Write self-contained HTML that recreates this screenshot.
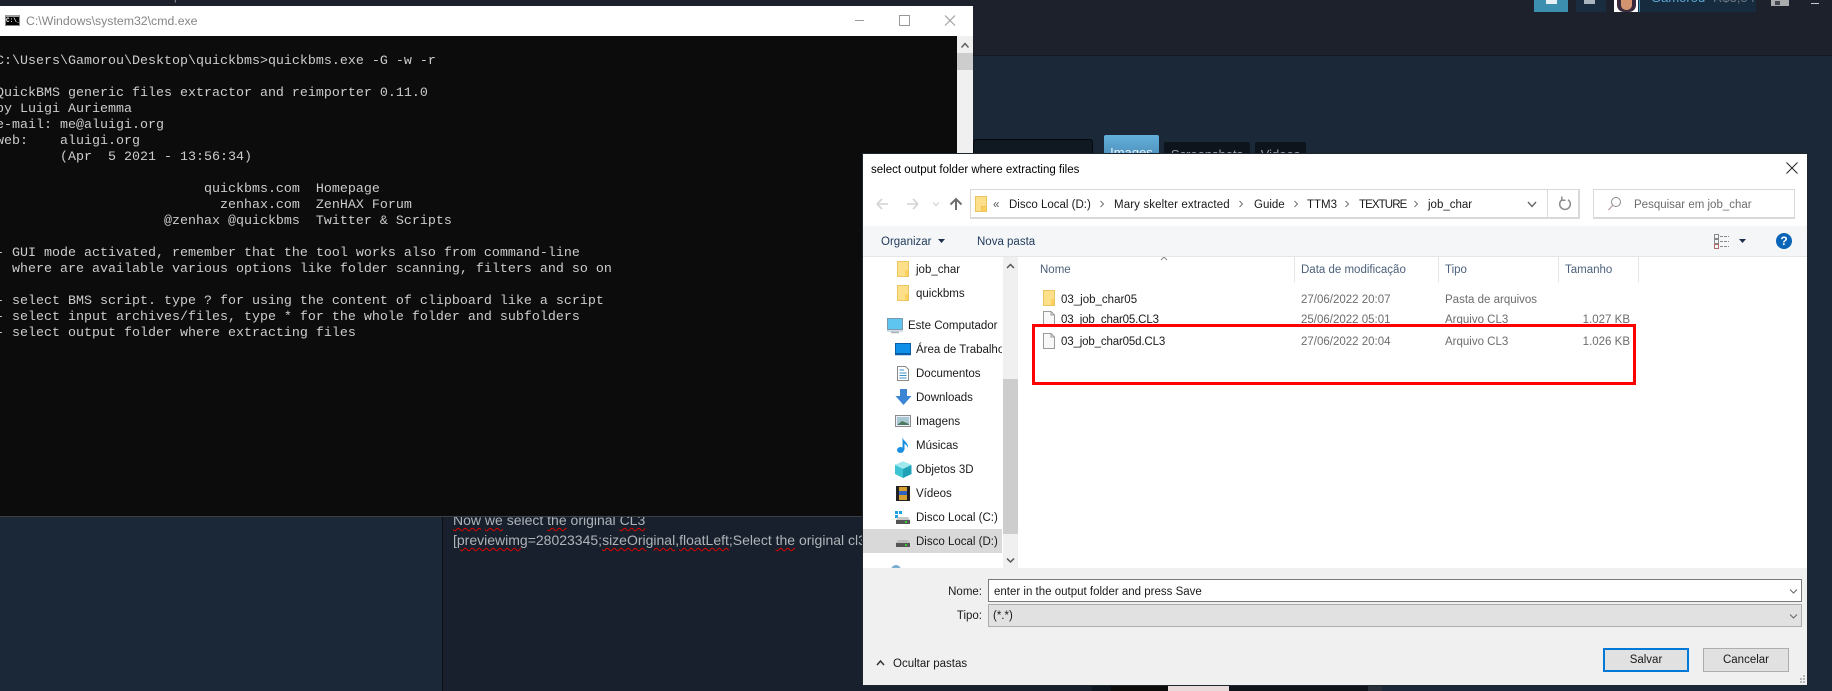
<!DOCTYPE html>
<html><head><meta charset="utf-8">
<style>
html,body{margin:0;padding:0;width:1832px;height:691px;overflow:hidden;background:#1b2838}
*{box-sizing:border-box}
.a{position:absolute}
.t{position:absolute;white-space:nowrap;line-height:16px;height:16px;font:11.5px/16px "Liberation Sans",sans-serif;color:#1a1a1a;transform:translateY(1px)}
.g{color:#6d6d6d}
.sq{text-decoration:underline wavy #e00000;text-decoration-thickness:1px;text-underline-offset:2px}
svg{position:absolute;overflow:visible}
pre{margin:0;position:absolute;left:-4px;top:54px;font:13.33px/16px "Liberation Mono",monospace;color:#ccc}
.sep{position:absolute;top:257px;width:1px;height:25px;background:#e5e5e5}
</style></head><body>

<!-- steam header -->
<div class="a" style="left:0;top:0;width:1832px;height:55px;background:#1c212b"></div>
<div class="a" style="left:0;top:55px;width:1832px;height:1px;background:#141a22"></div>
<div class="t" style="left:21px;top:-13px;color:#8a8f98;font-size:12px">View</div>
<div class="t" style="left:57px;top:-13px;color:#8a8f98;font-size:12px">Friends</div>
<div class="t" style="left:107px;top:-13px;color:#8a8f98;font-size:12px">Games</div>
<div class="t" style="left:156px;top:-13px;color:#8a8f98;font-size:12px">Help</div>

<div class="a" style="left:1534px;top:0;width:34px;height:12px;background:#3d8fb0"></div>
<div class="a" style="left:1546px;top:0;width:11px;height:4px;background:#e6f0f5"></div>
<div class="a" style="left:1576px;top:0;width:30px;height:12px;background:#1a2d40"></div>
<div class="a" style="left:1584px;top:0;width:11px;height:4px;background:#a9b4bc"></div>
<div class="a" style="left:1614px;top:0;width:142px;height:12px;background:#172b3e"></div>
<div class="a" style="left:1614px;top:0;width:24px;height:12px;background:#fff;overflow:hidden">
  <div class="a" style="left:3px;top:-2px;width:19px;height:14px;background:#3a2a3e;border-radius:0 0 7px 7px"></div>
  <div class="a" style="left:7px;top:0;width:11px;height:10px;background:#d2936f;border-radius:0 0 5px 5px"></div>
</div>
<div class="a" style="left:1639px;top:0;width:1px;height:12px;background:#3d8fb0"></div>
<div class="a" style="left:1640px;top:0;width:116px;height:12px;overflow:hidden">
  <div class="t" style="left:11px;top:-11px;color:#5aa9d6;font-size:13px">Gamorou</div>
  <div class="t" style="left:63px;top:-11px;color:#7cb8dc;font-size:8px">▼</div>
  <div class="t" style="left:73px;top:-11px;color:#6d7782;font-size:13px">R$3,54</div>
</div>
<div class="a" style="left:1771px;top:0;width:18px;height:6px;background:#a8aaac"></div>
<div class="a" style="left:1775px;top:1px;width:5px;height:4px;background:#44484e"></div>
<div class="a" style="left:1811px;top:3px;width:8px;height:1px;background:#c8ccd0"></div>

<!-- page panels -->
<div class="a" style="left:443px;top:510px;width:650px;height:181px;background:#17202c"></div>
<div class="a" style="left:442px;top:510px;width:1px;height:181px;background:#0a0e13"></div>
<div class="t" style="left:453px;top:511px;font-size:14px;color:#b0b4b9"><span class="sq">Now</span> <span class="sq">we</span> select <span class="sq">the</span> original <span class="sq">CL3</span></div>
<div class="t" style="left:453px;top:531px;font-size:14px;color:#b0b4b9;width:410px;overflow:hidden;height:22px"><span class="sq">[previewimg</span>=28023345;<span class="sq">sizeOriginal</span>,<span class="sq">floatLeft</span>;Select <span class="sq">the</span> original cl3 file</div>
<div class="a" style="left:1092px;top:685px;width:19px;height:6px;background:#101620"></div>
<div class="a" style="left:1111px;top:685px;width:57px;height:6px;background:#0c0c0c"></div>
<div class="a" style="left:1168px;top:685px;width:61px;height:6px;background:#e8dada"></div>
<div class="a" style="left:1229px;top:685px;width:139px;height:6px;background:#0f141b"></div>
<div class="a" style="left:1368px;top:685px;width:14px;height:6px;background:#2a3039"></div>

<!-- tabs + input -->
<div class="a" style="left:973px;top:139px;width:120px;height:20px;background:#101822;border:1px solid #05080c;border-radius:3px"></div>
<div class="a" style="left:1104px;top:135px;width:55px;height:24px;background:linear-gradient(#64b0dc,#4a8db8);border-radius:2px 2px 0 0;color:#e8f2f8;font:13px/36px 'Liberation Sans',sans-serif;text-align:center">Images</div>
<div class="a" style="left:1164px;top:142px;width:86px;height:18px;background:#0e141b;border-radius:2px 2px 0 0;color:#9aa2aa;font:13px/26px 'Liberation Sans',sans-serif;text-align:center">Screenshots</div>
<div class="a" style="left:1255px;top:142px;width:51px;height:18px;background:#0e141b;border-radius:2px 2px 0 0;color:#9aa2aa;font:13px/26px 'Liberation Sans',sans-serif;text-align:center">Videos</div>

<!-- cmd window -->
<div class="a" style="left:0;top:6px;width:973px;height:511px;background:#0c0c0c;border-bottom:1px solid #3c4046;overflow:hidden">
  <div class="a" style="left:0;top:0;width:973px;height:30px;background:#fff"></div>
  <div class="a" style="left:957px;top:30px;width:16px;height:481px;background:#f0f0f0"></div>
  <div class="a" style="left:957px;top:47px;width:16px;height:17px;background:#cdcdcd"></div>
</div>
<div class="a" style="left:5px;top:15px;width:15px;height:11px;background:#000;border:1px solid #8a8a8a;border-top:2px solid #9a9a9a;color:#fff;font:bold 6px/8px 'Liberation Mono',monospace;overflow:hidden">C:\_</div>
<div class="t" style="left:26px;top:12px;font-size:12.3px;color:#858585">C:\Windows\system32\cmd.exe</div>
<svg style="left:0;top:0" width="973" height="60">
  <path d="M855 20.5H864" stroke="#999" fill="none"/>
  <rect x="899.5" y="15.5" width="10" height="10" stroke="#999" fill="none"/>
  <path d="M945 15.5L955 25.5M955 15.5L945 25.5" stroke="#999" fill="none"/>
  <path d="M961.5 47.5L965 43.5L968.5 47.5" stroke="#606060" stroke-width="1.5" fill="none"/>
</svg>
<pre>C:\Users\Gamorou\Desktop\quickbms>quickbms.exe -G -w -r

QuickBMS generic files extractor and reimporter 0.11.0
by Luigi Auriemma
e-mail: me@aluigi.org
web:    aluigi.org
        (Apr  5 2021 - 13:56:34)

                          quickbms.com  Homepage
                            zenhax.com  ZenHAX Forum
                     @zenhax @quickbms  Twitter &amp; Scripts

- GUI mode activated, remember that the tool works also from command-line
  where are available various options like folder scanning, filters and so on

- select BMS script. type ? for using the content of clipboard like a script
- select input archives/files, type * for the whole folder and subfolders
- select output folder where extracting files</pre>

<!-- dialog -->
<div class="a" style="left:862px;top:153px;width:946px;height:533px;background:#20262e"></div>
<div class="a" style="left:863px;top:154px;width:944px;height:531px;background:#fff"></div>
<div class="t" style="left:871px;top:161px;font-size:11.5px;color:#000">select output folder where extracting files</div>
<svg style="left:0;top:0" width="1832" height="691">
  <path d="M1786.5 162.5L1797.5 173.5M1797.5 162.5L1786.5 173.5" stroke="#222" fill="none"/>
  <!-- nav -->
  <path d="M877 204H888M877 204L882 199M877 204L882 209" stroke="#d4d4d4" stroke-width="1.6" fill="none"/>
  <path d="M907 204H918M918 204L913 199M918 204L913 209" stroke="#d4d4d4" stroke-width="1.6" fill="none"/>
  <path d="M933 202.5L936 205.5L939 202.5" stroke="#d4d4d4" stroke-width="1.2" fill="none"/>
  <path d="M956 210V199M950.5 204.5L956 199L961.5 204.5" stroke="#6e6e6e" stroke-width="2" fill="none"/>
  <!-- breadcrumb chevrons -->
  <path d="M1100.5 201L1103.5 204L1100.5 207M1239.5 201L1242.5 204L1239.5 207M1294.5 201L1297.5 204L1294.5 207M1345.5 201L1348.5 204L1345.5 207M1414.5 201L1417.5 204L1414.5 207" stroke="#707070" fill="none"/>
  <path d="M1528 202L1532 206.5L1536 202" stroke="#666" stroke-width="1.4" fill="none"/>
  <path d="M1568 199.8A5.3 5.3 0 1 1 1562 199.8M1561.800 196.500V200.300H1565.500" stroke="#8a8a8a" stroke-width="1.5" fill="none"/>
  <!-- search -->
  <circle cx="1616" cy="202" r="4.5" stroke="#8a8a8a" fill="none"/>
  <path d="M1612.5 205.5L1608.5 210" stroke="#b09a9a" stroke-width="1.2" fill="none"/>
  <!-- sort caret / sidebar arrows -->
  <path d="M1161 260L1164 257L1167 260" stroke="#8a8a8a" fill="none"/>
  <path d="M1007 268L1010.500 264.500L1014 268" stroke="#555" stroke-width="1.5" fill="none"/>
  <path d="M1007 558.500L1010.500 562L1014 558.500" stroke="#555" stroke-width="1.5" fill="none"/>
</svg>

<!-- address + search -->
<div class="a" style="left:970px;top:189px;width:610px;height:30px;border:1px solid #d9d9d9;border-bottom-width:2px;border-right-width:2px"></div>
<div class="a" style="left:1547px;top:189px;width:1px;height:30px;background:#d9d9d9"></div>
<div class="a" style="left:1593px;top:189px;width:202px;height:30px;border:1px solid #d9d9d9;border-bottom-width:2px"></div>
<div class="a" style="left:975px;top:196px;width:12px;height:16px;background:#ffe08a;border:1px solid #eac45c"></div>
<div class="a" style="left:981px;top:206px;width:5px;height:5px;background:#ffd15c;border-left:1px solid #eac45c;border-top:1px solid #eac45c"></div>
<div class="t" style="left:993px;top:196px;color:#555">«</div>
<div class="t" style="left:1009px;top:196px">Disco Local (D:)</div>
<div class="t" style="left:1114px;top:196px;letter-spacing:.12px">Mary skelter extracted</div>
<div class="t" style="left:1254px;top:196px">Guide</div>
<div class="t" style="left:1307px;top:196px">TTM3</div>
<div class="t" style="left:1359px;top:196px;letter-spacing:-.9px">TEXTURE</div>
<div class="t" style="left:1428px;top:196px">job_char</div>
<div class="t g" style="left:1634px;top:196px">Pesquisar em job_char</div>

<!-- toolbar -->
<div class="a" style="left:863px;top:226px;width:944px;height:30px;background:#f5f6f7"></div>
<div class="a" style="left:863px;top:256px;width:944px;height:1px;background:#e6e6e6"></div>
<div class="t" style="left:881px;top:233px;color:#1e395b">Organizar</div>
<svg style="left:0;top:0" width="1832" height="691">
  <path d="M938 239H945L941.500 243Z" fill="#1e2f4d"/>
  <path d="M1739 239H1746L1742.500 243Z" fill="#1e2f4d"/>
  <rect x="1714.500" y="234.500" width="4" height="4" fill="none" stroke="#8a8a8a"/>
  <rect x="1714.500" y="239.500" width="4" height="4" fill="none" stroke="#8a8a8a"/>
  <rect x="1714.500" y="244.500" width="4" height="4" fill="none" stroke="#b06a6a"/>
  <path d="M1720 236.500H1729M1720 241.500H1729M1720 246.500H1729" stroke="#8a8a8a" stroke-dasharray="3 1" fill="none"/>
</svg>
<div class="t" style="left:977px;top:233px;color:#1e395b">Nova pasta</div>
<div class="a" style="left:1776px;top:233px;width:16px;height:16px;border-radius:50%;background:#0a64b8;color:#fff;font:bold 12px/16px 'Liberation Sans',sans-serif;text-align:center">?</div>

<!-- sidebar -->
<div class="a" style="left:863px;top:529px;width:139px;height:24px;background:#d9d9d9"></div>
<div class="a" style="left:1003px;top:257px;width:15px;height:311px;background:#f0f0f0"></div>
<div class="a" style="left:1003px;top:379px;width:15px;height:155px;background:#cdcdcd"></div>
<svg style="left:0;top:0" width="1832" height="691">
  <path d="M1007 268L1010.500 264.500L1014 268" stroke="#555" stroke-width="1.500" fill="none"/>
  <path d="M1007 558.500L1010.500 562L1014 558.500" stroke="#555" stroke-width="1.500" fill="none"/>
  <defs>
    <g id="f"><rect x=".5" y=".5" width="11" height="15" fill="#ffe08a" stroke="#eac45c"/><rect x="8" y="9" width="3" height="6" fill="#ffd15c"/></g>
    <g id="d"><path d="M.5 .5H8L11.500 4V15.500H.5Z" fill="#f8f8f8" stroke="#9a9a9a"/><path d="M8 .5V4H11.500" fill="none" stroke="#9a9a9a"/></g>
  </defs>
  <use href="#f" x="897" y="261"/>
  <use href="#f" x="897" y="285"/>
  <use href="#f" x="1043" y="290"/>
  <use href="#d" x="1043" y="311"/>
  <!-- computer -->
  <rect x="887.500" y="318.500" width="15" height="11" fill="#5ec4f0" stroke="#7b9ab0"/>
  <path d="M887 331H903" stroke="#a8bccc"/>
  <path d="M891 332.500H899" stroke="#aab4be" stroke-width="1.500"/>
  <!-- desktop -->
  <rect x="895.500" y="343.500" width="15" height="10" fill="#0f8fe8" stroke="#0a5ea8"/>
  <path d="M895 354.500H911" stroke="#0a5ea8" stroke-width="1.500"/>
  <!-- documents -->
  <path d="M897.500 366.500H905.500L908.500 369.500V380.500H897.500Z" fill="#fff" stroke="#8a8a8a"/>
  <path d="M899.500 370H904M899.500 373H906.500M899.500 375.500H906.500M899.500 378H906.500" stroke="#3a90c8"/>
  <!-- downloads -->
  <path d="M900 389H907V396H911.500L903.500 405L895.500 396H900Z" fill="#3a86d4"/>
  <!-- images -->
  <rect x="895.500" y="415.500" width="15" height="11" fill="#eef" stroke="#8a8a8a"/>
  <rect x="897" y="417" width="12" height="8" fill="#a8c8d4"/>
  <path d="M897 425L902 421L909 424V425Z" fill="#4e7a5e"/>
  <!-- music -->
  <ellipse cx="900.500" cy="450" rx="3.500" ry="3" fill="#1a8fe0"/>
  <path d="M902.500 450V437C903 441 909 443 908 448C907 445 905 444 904.500 444V450Z" fill="#1a8fe0"/>
  <!-- 3D -->
  <path d="M903 461.500L911.500 465V474L903 478L895 474V465Z" fill="#3cc4d2"/>
  <path d="M903 469L911.500 465L903 461.500L895 465Z" fill="#9ee8ee"/>
  <path d="M903 469V478L911.500 474V465Z" fill="#1fa2b8"/>
  <!-- video -->
  <rect x="896" y="486" width="14" height="15" fill="#222"/>
  <rect x="899" y="487" width="8" height="13" fill="#d4a030"/>
  <rect x="899" y="491" width="8" height="4" fill="#3060c0"/>
  <!-- drive C -->
  <rect x="895" y="511" width="3" height="3" fill="#1aa0e8"/><rect x="899" y="511" width="3" height="3" fill="#1aa0e8"/><rect x="895" y="515" width="3" height="3" fill="#1aa0e8"/>
  <path d="M898 517H908L910 520H896Z" fill="#c8c8c8"/><rect x="896" y="520" width="14" height="4" fill="#555"/><rect x="905" y="521" width="2" height="2" fill="#3c3"/>
  <!-- drive D -->
  <path d="M898 540H908L910 543H896Z" fill="#bdbdbd"/><rect x="896" y="543" width="14" height="4" fill="#555"/><rect x="905" y="544" width="2" height="2" fill="#3c3"/>
  <!-- network sliver -->
  <circle cx="896" cy="570" r="5" fill="#7aaed0"/>
</svg>
<div class="t" style="left:916px;top:261px">job_char</div>
<div class="t" style="left:916px;top:285px">quickbms</div>
<div class="t" style="left:908px;top:317px;width:94px;overflow:hidden">Este Computador</div>
<div class="t" style="left:916px;top:341px;width:86px;overflow:hidden">Área de Trabalho</div>
<div class="t" style="left:916px;top:365px">Documentos</div>
<div class="t" style="left:916px;top:389px">Downloads</div>
<div class="t" style="left:916px;top:413px">Imagens</div>
<div class="t" style="left:916px;top:437px">Músicas</div>
<div class="t" style="left:916px;top:461px">Objetos 3D</div>
<div class="t" style="left:916px;top:485px">Vídeos</div>
<div class="t" style="left:916px;top:509px">Disco Local (C:)</div>
<div class="t" style="left:916px;top:533px">Disco Local (D:)</div>

<!-- file list -->
<div class="sep" style="left:1294px"></div>
<div class="sep" style="left:1438px"></div>
<div class="sep" style="left:1558px"></div>
<div class="sep" style="left:1638px"></div>
<div class="t" style="left:1040px;top:261px;color:#4c607a">Nome</div>
<div class="t" style="left:1301px;top:261px;color:#4c607a">Data de modificação</div>
<div class="t" style="left:1445px;top:261px;color:#4c607a">Tipo</div>
<div class="t" style="left:1565px;top:261px;color:#4c607a">Tamanho</div>
<div class="t" style="left:1061px;top:291px">03_job_char05</div>
<div class="t g" style="left:1301px;top:291px">27/06/2022 20:07</div>
<div class="t g" style="left:1445px;top:291px">Pasta de arquivos</div>
<div class="t" style="left:1061px;top:311px;letter-spacing:-.15px">03_job_char05.CL3</div>
<div class="t g" style="left:1301px;top:311px">25/06/2022 05:01</div>
<div class="t g" style="left:1445px;top:311px">Arquivo CL3</div>
<div class="t g" style="right:202px;top:311px">1.027 KB</div>
<div class="a" style="left:1032px;top:324px;width:604px;height:61px;background:#fff;border:3px solid #f00"></div>
<svg style="left:0;top:0" width="1832" height="691"><use href="#d" x="1043" y="333"/></svg>
<div class="t" style="left:1061px;top:333px;letter-spacing:-.15px">03_job_char05d.CL3</div>
<div class="t g" style="left:1301px;top:333px">27/06/2022 20:04</div>
<div class="t g" style="left:1445px;top:333px">Arquivo CL3</div>
<div class="t g" style="right:202px;top:333px">1.026 KB</div>

<!-- footer -->
<div class="a" style="left:863px;top:568px;width:944px;height:117px;background:#f0f0f0"></div>
<div class="t" style="right:850px;top:583px">Nome:</div>
<div class="a" style="left:988px;top:579px;width:814px;height:23px;background:#fff;border:1px solid #7a7a7a"></div>
<div class="t" style="left:994px;top:583px">enter in the output folder and press Save</div>
<div class="t" style="right:850px;top:607px">Tipo:</div>
<div class="a" style="left:988px;top:604px;width:814px;height:23px;background:#e1e1e1;border:1px solid #adadad"></div>
<div class="t" style="left:993px;top:607px">(*.*)</div>
<div class="a" style="left:1603px;top:648px;width:86px;height:24px;background:#e1e1e1;border:2px solid #0078d7;font:11.5px/20px 'Liberation Sans',sans-serif;text-align:center;color:#1a1a1a">Salvar</div>
<div class="a" style="left:1703px;top:648px;width:86px;height:24px;background:#e1e1e1;border:1px solid #adadad;font:11.5px/22px 'Liberation Sans',sans-serif;text-align:center;color:#1a1a1a">Cancelar</div>
<div class="t" style="left:893px;top:655px">Ocultar pastas</div>
<svg style="left:0;top:0" width="1832" height="691">
  <path d="M1790 589.500L1793.500 593L1797 589.500M1790 614.500L1793.500 618L1797 614.500" stroke="#666" fill="none"/>
  <path d="M877 665L880.500 661L884 665" stroke="#333" stroke-width="1.500" fill="none"/>
  <path d="M1800 682h2M1803 682h2M1803 679h2M1800 679h2M1803 676h2" stroke="#b8b8b8" stroke-width="2"/>
</svg>
</body></html>
